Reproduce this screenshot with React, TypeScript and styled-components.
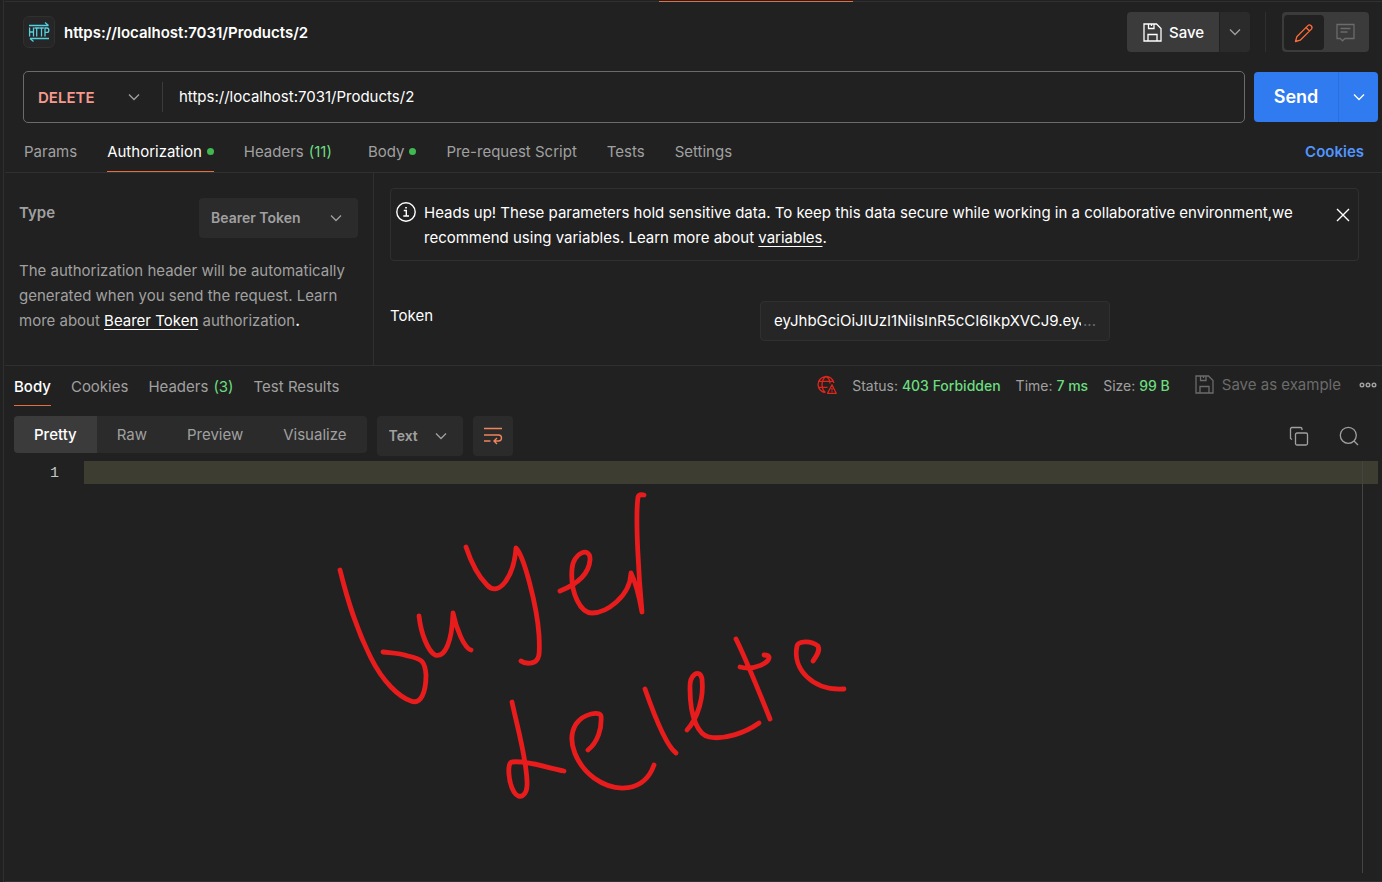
import React from "react";
import styled, { createGlobalStyle, css } from "styled-components";

const c = {
  bg: "#212121",
  line: "#303030",
  soft: "#2b2b2b",
  raised: "#3b3b3b",
  text: "#ffffff",
  muted: "#a0a0a0",
  dim: "#6b6b6b",
  orange: "#ff6c37",
  mark: "#e66c42",
  green: "#6bdd7f",
  blue: "#307bf0",
};

const GlobalStyle = createGlobalStyle`
  *, *::before, *::after { box-sizing: border-box; }
  html, body, #root { height: 100%; }
  body { margin: 0; background: ${c.bg}; }
  body, button, input, select {
    font-family: Inter, "Liberation Sans", sans-serif;
    font-size: 15px;
    line-height: 25px;
    color: ${c.text};
  }
  button { border: 0; padding: 0; margin: 0; background: none; cursor: pointer; }
  p, h1 { margin: 0; }
  svg { display: block; flex: none; }
`;

const Page = styled.main`
  min-height: 100%;
  display: flex;
  flex-direction: column;
  margin-left: 3px;
  border-left: 1px solid ${c.line};
  padding-left: 1px;
  background: ${c.bg};
`;

const TabStrip = styled.div`
  display: flex;
  height: 2px;
  align-items: flex-end;
  border-bottom: 1px solid ${c.line};
`;

const ActiveMark = styled.span`
  width: 14.1%;
  height: 1px;
  margin-left: 47.5%;
  margin-bottom: -1px;
  background: ${c.mark};
`;

const Header = styled.header`
  display: flex;
  align-items: center;
  height: 60px;
  padding: 0 13px 0 18px;
`;

const HttpBadge = styled.span`
  display: grid;
  place-items: center;
  width: 32px;
  height: 32px;
  border: 1px solid ${c.line};
  border-radius: 6px;
  background: #262626;
`;

const Title = styled.h1`
  flex: 1;
  margin-left: 9px;
  font-size: 15px;
  font-weight: 600;
`;

const SplitButton = styled.div`
  display: flex;
  gap: 1px;
  height: 40px;
`;

const SaveButton = styled.button`
  display: flex;
  align-items: center;
  gap: 7px;
  width: 92px;
  padding-left: 16px;
  font-weight: 500;
  background: ${c.raised};
  border-radius: 4px 0 0 4px;
`;

const SaveMore = styled.button`
  display: grid;
  place-items: center;
  width: 30px;
  background: ${c.soft};
  border-radius: 0 4px 4px 0;
  color: ${c.muted};
`;

const Rule = styled.span<{ $h: number }>`
  width: 1px;
  height: ${(p) => p.$h}px;
  background: ${c.raised};
`;

const HeaderRule = styled(Rule)`
  margin: 0 16px 0 15px;
  background: ${c.line};
`;

const ModeSwitch = styled.div`
  display: flex;
  height: 40px;
  padding: 3px 2px 2px;
  border-radius: 4px;
  background: ${c.raised};
`;

const ModeButton = styled.button<{ $on?: boolean }>`
  display: grid;
  place-items: center;
  width: ${(p) => (p.$on ? 40 : 43)}px;
  border-radius: 4px;
  color: ${(p) => (p.$on ? c.orange : c.dim)};
  background: ${(p) => (p.$on ? c.bg : "transparent")};
`;

const RequestRow = styled.form`
  display: flex;
  align-items: center;
  gap: 9px;
  padding: 9px 4px 0 18px;
`;

const UrlBox = styled.div`
  display: flex;
  flex: 1;
  align-items: center;
  height: 52px;
  border: 1px solid #6b6b6b;
  border-radius: 5px;
`;

const SelectWrap = styled.span`
  position: relative;
  display: flex;
  align-items: center;
`;

const SelectArrow = styled.span<{ $right: number }>`
  position: absolute;
  right: ${(p) => p.$right}px;
  color: ${c.muted};
  pointer-events: none;
`;

const bareSelect = css`
  appearance: none;
  border: 0;
  margin: 0;
  outline: 0;
`;

const MethodSelect = styled.select`
  ${bareSelect}
  width: 138px;
  height: 30px;
  padding-left: 14px;
  background: transparent;
  color: #f79a8e;
  font-size: 15px;
  font-weight: 600;
`;

const BoxSelect = styled.select<{ $w: number }>`
  ${bareSelect}
  width: ${(p) => p.$w}px;
  height: 40px;
  padding: 0 0 2px 12px;
  border-radius: 4px;
  background: ${c.soft};
  color: ${c.muted};
  font-size: 14px;
  font-weight: 600;
`;

const UrlInput = styled.input`
  flex: 1;
  min-width: 0;
  height: 48px;
  padding: 0 16px 2px;
  border: 0;
  outline: 0;
  background: transparent;
`;

const SendGroup = styled.div`
  display: flex;
  height: 50px;
`;

const SendButton = styled.button`
  width: 84px;
  padding-bottom: 2px;
  border-radius: 4px 0 0 4px;
  background: ${c.blue};
  font-size: 18px;
  font-weight: 600;
`;

const SendMore = styled.button`
  display: grid;
  place-items: center;
  width: 40px;
  border-left: 1px solid #2a6fdc;
  border-radius: 0 4px 4px 0;
  background: ${c.blue};
`;

const RequestTabs = styled.nav`
  display: flex;
  gap: 30px;
  height: 50px;
  padding: 8px 18px 0 19px;
  border-bottom: 1px solid ${c.line};
`;

const Tab = styled.button<{ $on?: boolean }>`
  display: flex;
  align-items: center;
  gap: 5px;
  height: 41px;
  color: ${(p) => (p.$on ? c.text : c.muted)};
  box-shadow: ${(p) => (p.$on ? `inset 0 -1px ${c.mark}` : "none")};
`;

const ResponseTab = styled(Tab)`
  height: 40px;
  font-weight: ${(p) => (p.$on ? 500 : 400)};
`;

const Dot = styled.span`
  width: 7px;
  height: 7px;
  border-radius: 50%;
  background: #3fb950;
`;

const Count = styled.span`
  color: ${c.green};
`;

const RequestCount = styled(Count)`
  margin-right: 6px;
`;

const CookiesLink = styled.a`
  display: flex;
  align-items: center;
  height: 41px;
  margin-left: auto;
  color: #5196ff;
  font-weight: 600;
  text-decoration: none;
`;

const AuthPanel = styled.section`
  display: flex;
  min-height: 193px;
  border-bottom: 1px solid ${c.line};
`;

const AuthType = styled.div`
  flex: none;
  width: 369px;
  padding: 25px 15px 0 14px;
  border-right: 1px solid ${c.line};
  color: ${c.muted};
`;

const TypeRow = styled.div`
  display: flex;
  justify-content: space-between;
  margin-bottom: 20px;
`;

const TypeLabel = styled.label`
  height: 30px;
  line-height: 30px;
  font-weight: 600;
`;

const InkLink = styled.a`
  color: ${c.text};
  text-underline-offset: 3px;
`;

const Ink = styled.span`
  color: ${c.text};
  font-weight: 600;
`;

const AuthDetail = styled.div`
  flex: 1;
  padding: 15px 23px 0 16px;
`;

const Notice = styled.div`
  display: flex;
  align-items: flex-start;
  min-height: 73px;
  padding: 11px 7px 0 5px;
  border: 1px solid ${c.line};
  border-radius: 4px;
`;

const NoticeText = styled.p`
  flex: 1;
  margin: 0 32px 0 8px;
`;

const IconButton = styled.button`
  display: grid;
  place-items: center;
  width: 16px;
  height: 30px;
  color: ${c.text};
`;

const TokenRow = styled.div`
  display: flex;
  align-items: flex-start;
  margin-top: 40px;
`;

const TokenLabel = styled.label`
  width: 370px;
  padding-top: 2px;
`;

const TokenBox = styled.div`
  display: flex;
  align-items: center;
  width: 350px;
  height: 40px;
  padding: 0 13px 2px;
  border: 1px solid ${c.line};
  border-radius: 4px;
  background: #262626;
`;

const TokenInput = styled.input`
  flex: 1;
  min-width: 0;
  padding: 0;
  border: 0;
  outline: 0;
  background: transparent;
`;

const More = styled.span`
  margin-left: 2px;
  color: ${c.dim};
`;

const ResponseBar = styled.div`
  display: flex;
  align-items: flex-start;
  height: 40px;
  padding: 0 4px 0 9px;
`;

const ResponseTabs = styled.nav`
  display: flex;
  flex: 1;
  gap: 20px;
`;

const Meta = styled.div`
  display: flex;
  align-items: center;
  gap: 15px;
  height: 38px;
  color: ${c.muted};
`;

const Metric = styled.span`
  font-size: 14px;
`;

const Value = styled.span`
  color: ${c.green};
  font-weight: 500;
`;

const ExampleButton = styled.button`
  display: flex;
  align-items: center;
  gap: 8px;
  margin: 0 2px 2px 10px;
  color: ${c.dim};
`;

const MoreButton = styled.button`
  color: ${c.muted};
`;

const ViewBar = styled.div`
  display: flex;
  align-items: flex-start;
  gap: 10px;
  height: 45px;
  margin-top: 10px;
  padding: 0 23px 0 9px;
`;

const Segments = styled.div`
  display: flex;
  height: 37px;
  overflow: hidden;
  border-radius: 4px;
  background: ${c.soft};
`;

const Segment = styled.button<{ $on?: boolean }>`
  padding: 0 20px;
  color: ${(p) => (p.$on ? c.text : c.muted)};
  font-weight: ${(p) => (p.$on ? 500 : 400)};
  background: ${(p) => (p.$on ? c.raised : "transparent")};
`;

const WrapButton = styled.button`
  display: grid;
  place-items: center;
  width: 40px;
  height: 40px;
  border-radius: 4px;
  background: ${c.soft};
  color: #f0855c;
`;

const ViewTools = styled.div`
  display: flex;
  gap: 30px;
  height: 40px;
  margin-left: auto;
  align-items: center;
  color: ${c.muted};
`;

const ToolButton = styled.button`
  color: ${c.muted};
`;

const Editor = styled.section`
  position: relative;
  display: flex;
  flex: 1;
  min-height: 420px;
  padding-right: 4px;
`;

const Gutter = styled.div`
  width: 79px;
  padding-right: 25px;
  text-align: right;
  color: #c6c6c6;
  font-family: "Liberation Mono", monospace;
  line-height: 25px;
`;

const Code = styled.div`
  flex: 1;
`;

const CurrentLine = styled.div`
  height: 23px;
  background: #3e3d32;
`;

const Ruler = styled.span`
  position: absolute;
  top: 0;
  right: 19px;
  bottom: 8px;
  width: 1px;
  background: #454540;
`;

const Scribble = styled.svg`
  position: absolute;
  top: 19px;
  left: 315px;
  pointer-events: none;
`;

const BottomEdge = styled.div`
  height: 2px;
  border-top: 1px solid ${c.line};
`;

const Chevron = () => (
  <svg width="12" height="8" viewBox="0 0 12 8" fill="none" stroke="currentColor" strokeWidth="1.3">
    <path d="M1 1.500 6 6.500 11 1.500" />
  </svg>
);

const HttpIcon = () => (
  <svg width="22" height="22" viewBox="0 0 22 22" fill="none" stroke="#56cfe1" strokeWidth="1.3">
    <path d="M1 4.500H20.500M17 1.500 20.500 4.500M21 17.500H2M5.500 20.500 2 17.500" />
    <path d="M1.600 6.500V15.500M5.500 6.500V15.500M1.600 11H5.500M6.500 7H11M8.700 7V15.500M11.200 7H15.800M13.500 7V15.500M17 15.500V7H19Q20.800 7 20.800 9.200T19 11.400H17" />
  </svg>
);

const DiskIcon = () => (
  <svg width="19" height="19" viewBox="0 0 19 19" fill="none" stroke="currentColor" strokeWidth="1.3">
    <path d="M1 1H13.500L18 5.500V18H1ZM5.500 1V5.500H11V1M5 18V11.500H14V18M8.500 1V3" />
  </svg>
);

const PencilIcon = () => (
  <svg width="20" height="20" viewBox="0 0 20 20" fill="none" stroke="currentColor" strokeWidth="1.3" strokeLinejoin="round">
    <path d="M1.500 18.500 2.800 13.800 13.900 2.600C15.800.700 19.300 3.900 17.400 6.100L6.200 17.200ZM12 4.500 15.500 8" />
  </svg>
);

const CommentIcon = () => (
  <svg width="19" height="19" viewBox="0 0 19 19" fill="none" stroke="currentColor" strokeWidth="1.3">
    <path d="M1 1.500H18V15.500H9L6.500 17.800 4.200 15.500H1ZM4.500 5.500H14.500M4.500 9H11.500" />
  </svg>
);

const InfoIcon = () => (
  <svg width="20" height="24" viewBox="0 0 20 24" fill="none" stroke="currentColor" strokeWidth="1.4">
    <circle cx="10" cy="12" r="9.200" />
    <path d="M7.800 10.500H10.300V16M7.300 16H13M9.200 7.700H10.900" />
  </svg>
);

const CloseIcon = () => (
  <svg width="14" height="14" viewBox="0 0 14 14" fill="none" stroke="currentColor" strokeWidth="1.4">
    <path d="M1 1 13 13M13 1 1 13" />
  </svg>
);

const NetworkErrorIcon = () => (
  <svg width="20" height="20" viewBox="0 0 20 20" fill="none" stroke="#e0261b" strokeWidth="1.3" strokeLinejoin="round">
    <path d="M16.900 8A8 8 0 1 0 8.500 17.500M9 1.500C3.800 5 3.800 14 8.500 17.500M9 1.500C11.800 3 13 5.500 13 8.500M1 6.300H16.300M1 12.300H10.500" />
    <path d="M15 9.800 19.200 18.300H10.600ZM15 13V15.500M15 16.300V17.300" />
  </svg>
);

const MoreIcon = () => (
  <svg width="20" height="8" viewBox="0 0 20 8" fill="none" stroke="currentColor" strokeWidth="1.4">
    <circle cx="4" cy="4" r="1.800" />
    <circle cx="10" cy="4" r="1.800" />
    <circle cx="16" cy="4" r="1.800" />
  </svg>
);

const WrapIcon = () => (
  <svg width="20" height="18" viewBox="0 0 20 18" fill="none" stroke="currentColor" strokeWidth="1.4">
    <path d="M1 1.500H19M1 8H15.500C19.500 8 19.500 14 15.500 14H11.500M14 11 11 14 14 17M1 14H7.500" />
  </svg>
);

const CopyIcon = () => (
  <svg width="20" height="20" viewBox="0 0 20 20" fill="none" stroke="currentColor" strokeWidth="1.3">
    <rect x="6.500" y="7" width="12" height="12" rx="1.500" />
    <path d="M3 13.500 1.500 12.500V3Q1.500 1.500 3 1.500H11.500Q13 1.500 13 3V4" />
  </svg>
);

const SearchIcon = () => (
  <svg width="20" height="20" viewBox="0 0 20 20" fill="none" stroke="currentColor" strokeWidth="1.3">
    <circle cx="9.300" cy="9.300" r="8" />
    <path d="M15 15 19 19" />
  </svg>
);

const Handwriting = () => (
  <Scribble width="540" height="330" viewBox="320 480 540 330" fill="none" stroke="#e81c1c" strokeWidth="4.800" strokeLinecap="round" strokeLinejoin="round" aria-hidden="true">
    <path d="M340 570C348 602 356 628 371 658C383 682 399 697 411 701C421 705 426 692 426 675C425 661 422 659 408 656C400 653 392 653 383 652" />
    <path d="M419 616C421 634 428 651 435 655C445 658 452 642 453 613C456 628 464 648 471 650" />
    <path d="M466 547C471 562 479 577 487 585C499 598 514 576 516 548C524 556 537 606 539 635C540 654 540 662 531 663Q525 664 521 661" />
    <path d="M560 591C580 583 589 573 590 560C591 546 573 552 572 569C570 594 581 613 592 613C606 613 630 597 631 573C636 583 640 601 642 612C639 580 635 518 638 497Q639 494 644 495" />
    <path d="M512 702C517 726 526 756 527 781C528 797 519 800 514 792C508 782 507 762 512 762C526 760 548 768 564 771" />
    <path d="M588 750C598 742 602 728 601 716C600 711 584 713 576 724C565 742 578 766 594 778C615 793 644 793 654 765" />
    <path d="M645 689C652 709 665 745 676 753" />
    <path d="M687 730C698 718 704 697 702 679C700 668 689 674 690 689C690 719 699 735 709 737C724 740 745 733 759 723" />
    <path d="M736 639C744 655 764 704 770 719M740 667C755 671 770 662 769 657Q768 655 764 655" />
    <path d="M813 661C818 654 820 650 818 646C811 640 798 641 797 646C792 669 813 691 844 689" />
  </Scribble>
);

export default function App() {
  return (
    <>
      <GlobalStyle />
      <Page>
        <TabStrip>
          <ActiveMark />
        </TabStrip>
        <Header>
          <HttpBadge>
            <HttpIcon />
          </HttpBadge>
          <Title>https://localhost:7031/Products/2</Title>
          <SplitButton>
            <SaveButton type="button">
              <DiskIcon />
              Save
            </SaveButton>
            <SaveMore type="button" aria-label="Save options">
              <Chevron />
            </SaveMore>
          </SplitButton>
          <HeaderRule $h={40} />
          <ModeSwitch>
            <ModeButton type="button" $on aria-label="Edit">
              <PencilIcon />
            </ModeButton>
            <ModeButton type="button" aria-label="Comments">
              <CommentIcon />
            </ModeButton>
          </ModeSwitch>
        </Header>

        <RequestRow onSubmit={(e) => e.preventDefault()}>
          <UrlBox>
            <SelectWrap>
              <MethodSelect aria-label="Method" defaultValue="DELETE">
                <option>DELETE</option>
              </MethodSelect>
              <SelectArrow $right={22}>
                <Chevron />
              </SelectArrow>
            </SelectWrap>
            <Rule $h={30} />
            <UrlInput aria-label="Request URL" defaultValue="https://localhost:7031/Products/2" />
          </UrlBox>
          <SendGroup>
            <SendButton type="submit">Send</SendButton>
            <SendMore type="button" aria-label="Send options">
              <Chevron />
            </SendMore>
          </SendGroup>
        </RequestRow>

        <RequestTabs>
          <Tab type="button">Params</Tab>
          <Tab type="button" $on>
            Authorization
            <Dot />
          </Tab>
          <Tab type="button">
            Headers <RequestCount>(11)</RequestCount>
          </Tab>
          <Tab type="button">
            Body
            <Dot />
          </Tab>
          <Tab type="button">Pre-request Script</Tab>
          <Tab type="button">Tests</Tab>
          <Tab type="button">Settings</Tab>
          <CookiesLink href="#cookies">Cookies</CookiesLink>
        </RequestTabs>

        <AuthPanel>
          <AuthType>
            <TypeRow>
              <TypeLabel htmlFor="auth-type">Type</TypeLabel>
              <SelectWrap>
                <BoxSelect id="auth-type" $w={159} defaultValue="Bearer Token">
                  <option>Bearer Token</option>
                </BoxSelect>
                <SelectArrow $right={16}>
                  <Chevron />
                </SelectArrow>
              </SelectWrap>
            </TypeRow>
            <p>
              The authorization header will be automatically generated when you send the request. Learn more about{" "}
              <InkLink href="#bearer">Bearer Token</InkLink> authorization<Ink>.</Ink>
            </p>
          </AuthType>
          <AuthDetail>
            <Notice>
              <InfoIcon />
              <NoticeText>
                Heads up! These parameters hold sensitive data. To keep this data secure while working in a collaborative
                environment,we recommend using variables. Learn more about <InkLink href="#variables">variables</InkLink>.
              </NoticeText>
              <IconButton type="button" aria-label="Dismiss">
                <CloseIcon />
              </IconButton>
            </Notice>
            <TokenRow>
              <TokenLabel htmlFor="token">Token</TokenLabel>
              <TokenBox>
                <TokenInput id="token" defaultValue="eyJhbGciOiJIUzI1NiIsInR5cCI6IkpXVCJ9.eyJ" />
                <More>...</More>
              </TokenBox>
            </TokenRow>
          </AuthDetail>
        </AuthPanel>

        <ResponseBar>
          <ResponseTabs>
            <ResponseTab type="button" $on>
              Body
            </ResponseTab>
            <ResponseTab type="button">Cookies</ResponseTab>
            <ResponseTab type="button">
              Headers <Count>(3)</Count>
            </ResponseTab>
            <ResponseTab type="button">Test Results</ResponseTab>
          </ResponseTabs>
          <Meta>
            <NetworkErrorIcon />
            <Metric>
              Status: <Value>403 Forbidden</Value>
            </Metric>
            <Metric>
              Time: <Value>7 ms</Value>
            </Metric>
            <Metric>
              Size: <Value>99 B</Value>
            </Metric>
            <ExampleButton type="button">
              <DiskIcon />
              Save as example
            </ExampleButton>
            <MoreButton type="button" aria-label="More actions">
              <MoreIcon />
            </MoreButton>
          </Meta>
        </ResponseBar>

        <ViewBar>
          <Segments>
            <Segment type="button" $on>
              Pretty
            </Segment>
            <Segment type="button">Raw</Segment>
            <Segment type="button">Preview</Segment>
            <Segment type="button">Visualize</Segment>
          </Segments>
          <SelectWrap>
            <BoxSelect $w={86} aria-label="Response format" defaultValue="Text">
              <option>Text</option>
            </BoxSelect>
            <SelectArrow $right={16}>
              <Chevron />
            </SelectArrow>
          </SelectWrap>
          <WrapButton type="button" aria-label="Wrap lines">
            <WrapIcon />
          </WrapButton>
          <ViewTools>
            <ToolButton type="button" aria-label="Copy">
              <CopyIcon />
            </ToolButton>
            <ToolButton type="button" aria-label="Search">
              <SearchIcon />
            </ToolButton>
          </ViewTools>
        </ViewBar>

        <Editor>
          <Gutter>1</Gutter>
          <Code>
            <CurrentLine />
          </Code>
          <Ruler />
          <Handwriting />
        </Editor>
        <BottomEdge />
      </Page>
    </>
  );
}
